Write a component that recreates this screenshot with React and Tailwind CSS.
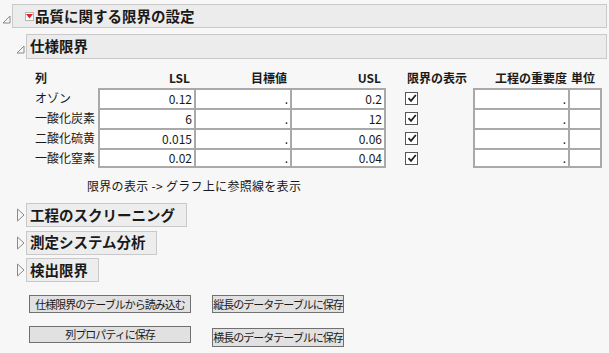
import React from 'react';

// --- data ---
const limits = [
  { name: 'オゾン', lsl: '0.12', usl: '0.2' },
  { name: '一酸化炭素', lsl: '6', usl: '12' },
  { name: '二酸化硫黄', lsl: '0.015', usl: '0.06' },
  { name: '一酸化窒素', lsl: '0.02', usl: '0.04' },
];

const sections = [
  { title: '工程のスクリーニング', width: 'w-[161px]' },
  { title: '測定システム分析', width: 'w-[131px]' },
  { title: '検出限界', width: 'w-[73px]' },
];

// --- little drawings ---
const OpenTriangle = () => (
  <svg width="9" height="9" viewBox="0 0 9 9" className="shrink-0">
    <polygon points="8,1 8,8 1,8" fill="none" stroke="#8a8a8a" strokeWidth="1" />
  </svg>
);

const ClosedTriangle = () => (
  <svg width="9" height="14" viewBox="0 0 9 14" className="shrink-0">
    <polygon points="1.5,1 8,7 1.5,13" fill="none" stroke="#8a8a8a" strokeWidth="1" />
  </svg>
);

const RedMenu = () => (
  <span className="w-[9px] h-[9px] border border-[#b5b5b5] bg-white flex items-center justify-center shrink-0">
    <svg width="7" height="5" viewBox="0 0 7 5">
      <polygon points="0,0 7,0 3.5,4.5" fill="#e0202a" />
    </svg>
  </span>
);

const CheckBox = () => (
  <span className="w-[13px] h-[13px] border border-[#555] bg-white flex items-center justify-center">
    <svg width="10" height="10" viewBox="0 0 10 10">
      <path d="M1.5 5.2 L4 7.8 L8.8 2" fill="none" stroke="#222" strokeWidth="1.8" />
    </svg>
  </span>
);

// one white entry cell of the grid
const Cell = ({ value, last, right }) => (
  <div
    className={`bg-white border-[#a9a9a9] border-t-2 border-l-2 ${right ? 'border-r-2' : ''} ${last ? 'border-b-2 h-[20px]' : 'h-[20px]'} flex items-center justify-end pr-[2px] text-[12px]`}
  >
    {value}
  </div>
);

const Button = ({ children, className = '' }) => (
  <button
    className={`border border-[#707070] bg-[#e1e1e1] text-[11px] tracking-[-1px] leading-none whitespace-nowrap overflow-hidden text-[#1a1a1a] flex items-center justify-center ${className}`}
  >
    {children}
  </button>
);

export default function App() {
  return (
    <div className="w-[609px] h-[353px] bg-[#f7f7f7] text-[#1a1a1a] font-['Noto_Sans_CJK_JP','Noto_Sans',sans-serif] overflow-hidden pt-[4px]">
      {/* top outline */}
      <div className="flex items-center pl-[2px] pr-[2px]">
        <div className="w-[10px] pt-[6px]"><OpenTriangle /></div>
        <div className="flex-1 h-[24px] border border-[#c9c9c9] bg-[#ececec] flex items-center pl-[12px] gap-[1px]">
          <RedMenu />
          <span className="text-[14.5px] font-bold leading-none">品質に関する限界の設定</span>
        </div>
      </div>

      {/* spec limits outline */}
      <div className="flex items-center pl-[16px] pr-[2px] mt-[6px]">
        <div className="w-[10px] pt-[6px]"><OpenTriangle /></div>
        <div className="flex-1 h-[25px] border border-[#c9c9c9] bg-[#ececec] flex items-center pl-[3px]">
          <span className="text-[14.5px] font-bold leading-none">仕様限界</span>
        </div>
      </div>

      {/* limits table */}
      <div className="ml-[35px] mt-[9px] grid grid-cols-[63px_96px_96px_96px_87px_95px_34px] text-[12px]">
        <div className="h-[20px] flex items-center font-bold">列</div>
        <div className="h-[20px] flex items-center justify-end pr-[4px] font-bold">LSL</div>
        <div className="h-[20px] flex items-center justify-end pr-[3px] font-bold">目標値</div>
        <div className="h-[20px] flex items-center justify-end pr-[5px] font-bold">USL</div>
        <div className="h-[20px] flex items-center pl-[21px] font-bold">限界の表示</div>
        <div className="h-[20px] flex items-center justify-end pr-[1px] font-bold">工程の重要度</div>
        <div className="h-[20px] flex items-center pl-[3px] font-bold">単位</div>

        {limits.map((row, i) => {
          const last = i === limits.length - 1;
          return (
            <React.Fragment key={row.name}>
              <div className="h-[20px] flex items-center">{row.name}</div>
              <Cell value={row.lsl} last={last} />
              <Cell value="." last={last} />
              <Cell value={row.usl} last={last} right />
              <div className="h-[20px] flex items-center pl-[19px]"><CheckBox /></div>
              <Cell value="." last={last} />
              <Cell value="" last={last} right />
            </React.Fragment>
          );
        })}
      </div>

      <div className="ml-[87px] mt-[10px] text-[12px] leading-[16px] tracking-[0.3px]">限界の表示 -&gt; グラフ上に参照線を表示</div>

      {/* collapsed outlines */}
      <div className="mt-[9px] flex flex-col gap-[3.5px] pl-[16px]">
        {sections.map((s) => (
          <div key={s.title} className="flex items-center">
            <div className="w-[10px] flex items-center"><ClosedTriangle /></div>
            <div className={`${s.width} h-[24px] border border-[#c9c9c9] bg-[#ededed] flex items-center pl-[3px]`}>
              <span className="text-[14.5px] font-bold leading-none whitespace-nowrap">{s.title}</span>
            </div>
          </div>
        ))}
      </div>

      {/* buttons */}
      <div className="ml-[29px] mt-[13px] flex items-start gap-[21px]">
        <Button className="w-[162px] h-[18px]">仕様限界のテーブルから読み込む</Button>
        <Button className="w-[132px] h-[18px]">縦長のデータテーブルに保存</Button>
      </div>
      <div className="ml-[29px] mt-[13px] flex items-start gap-[21px]">
        <Button className="w-[162px] h-[17px] bg-[#dcdcdc]">列プロパティに保存</Button>
        <Button className="w-[132px] h-[19px] mt-[2px]">横長のデータテーブルに保存</Button>
      </div>
    </div>
  );
}
